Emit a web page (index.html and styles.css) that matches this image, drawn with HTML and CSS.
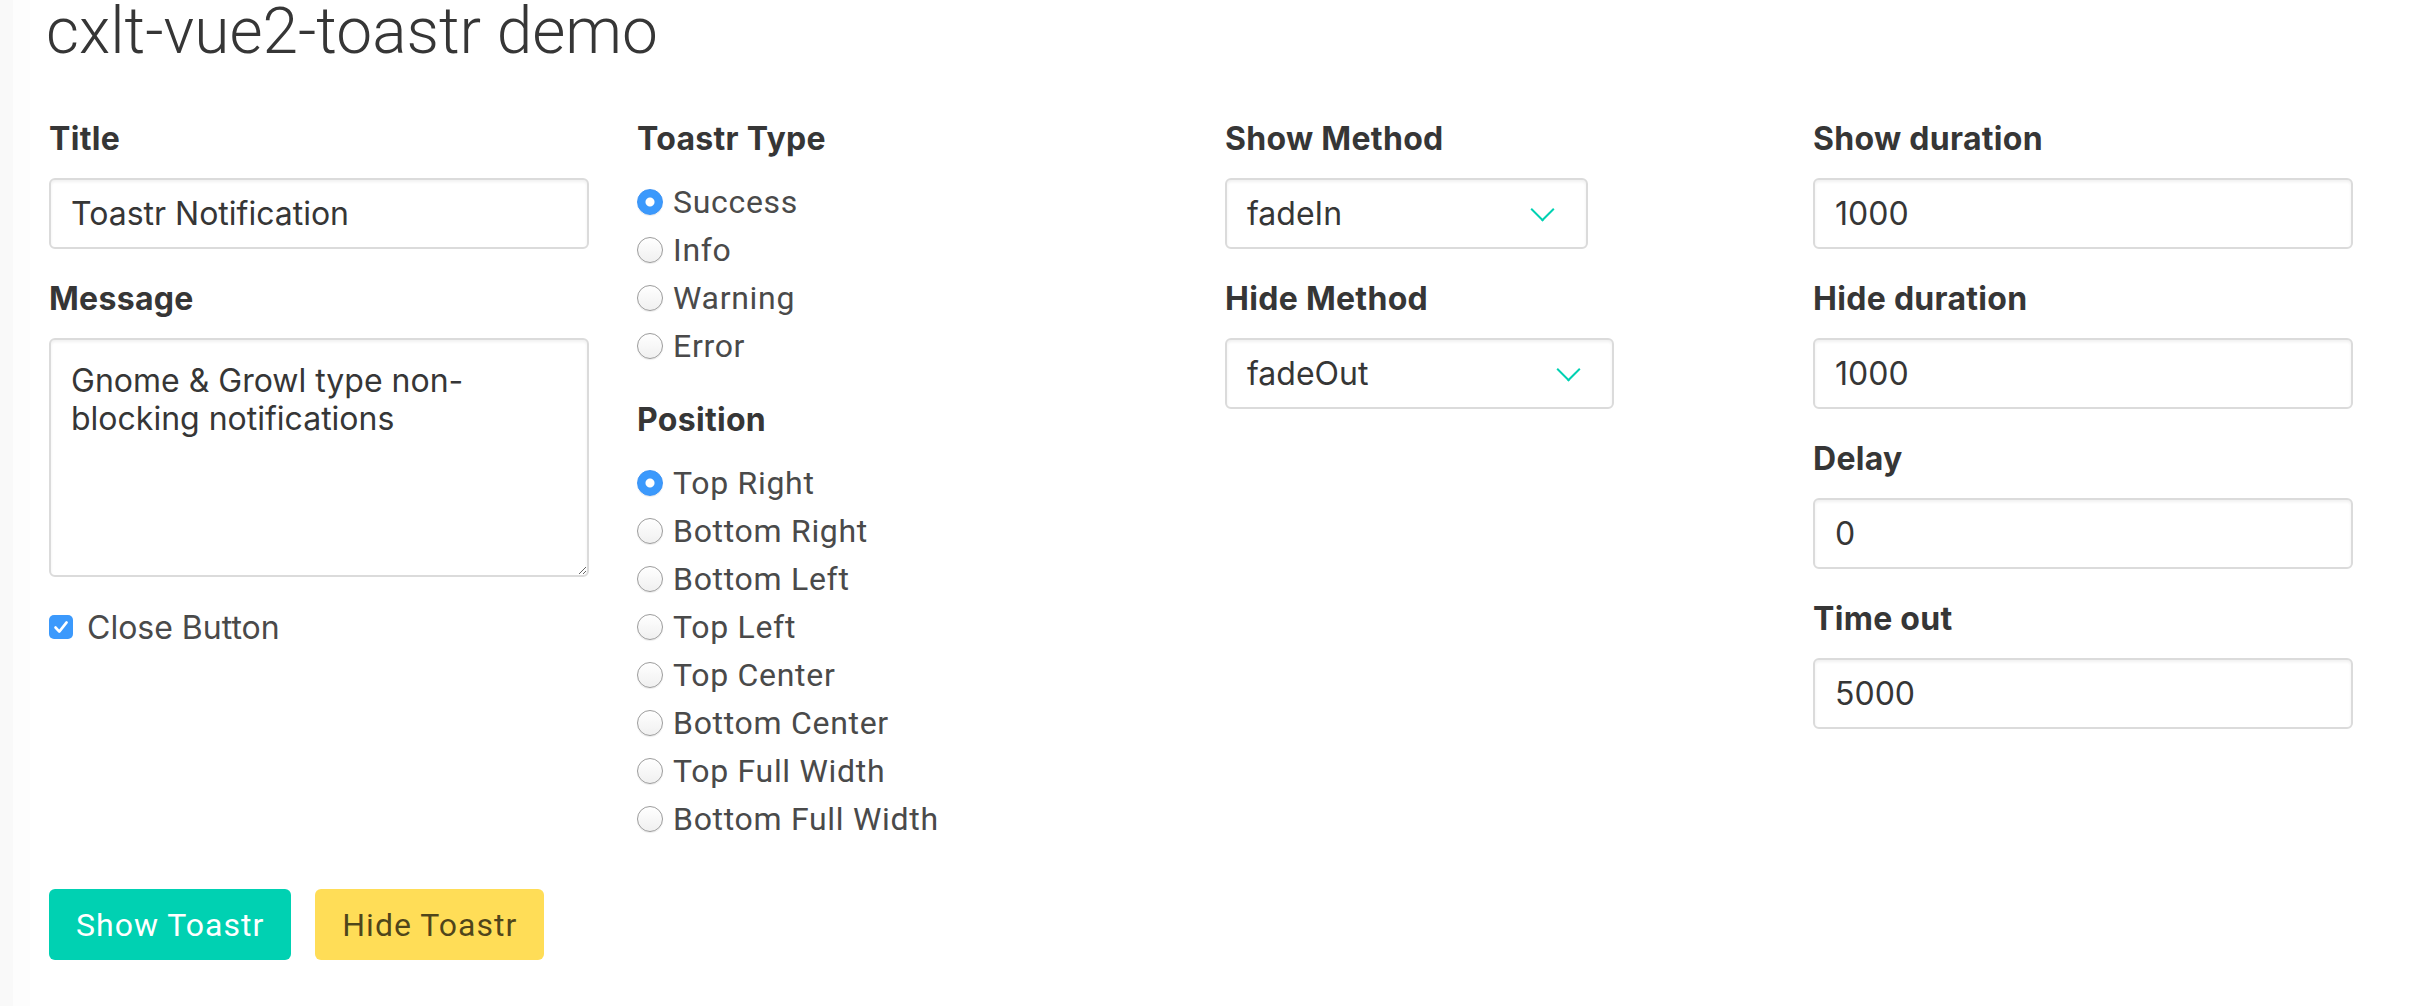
FILE: index.html
```html
<!DOCTYPE html>
<html lang="en">
<head>
<meta charset="utf-8">
<title>cxlt-vue2-toastr demo</title>
<link rel="stylesheet" href="styles.css">
</head>
<body>
<div class="page">
  <h1 class="title">cxlt-vue2-toastr demo</h1>
  <div class="columns">
    <div class="column">
      <div class="field">
        <label class="label">Title</label>
        <div class="input">Toastr Notification</div>
      </div>
      <div class="field">
        <label class="label">Message</label>
        <textarea class="textarea">Gnome &amp; Growl type non-blocking notifications</textarea>
      </div>
      <div class="check-row">
        <span class="checkbox"><svg width="24" height="24" viewBox="0 0 24 24"><path d="M6.5 12.5 L10.3 16.6 L17.6 7.4" fill="none" stroke="#fff" stroke-width="2.6" stroke-linecap="round" stroke-linejoin="round"/></svg></span>
        <span class="check-text">Close Button</span>
      </div>
    </div>
    <div class="column">
      <div class="field">
        <label class="label">Toastr Type</label>
        <div class="radio-row"><span class="radio checked"></span><span>Success</span></div>
        <div class="radio-row"><span class="radio"></span><span>Info</span></div>
        <div class="radio-row"><span class="radio"></span><span>Warning</span></div>
        <div class="radio-row"><span class="radio"></span><span>Error</span></div>
      </div>
      <div class="field">
        <label class="label">Position</label>
        <div class="radio-row"><span class="radio checked"></span><span>Top Right</span></div>
        <div class="radio-row"><span class="radio"></span><span>Bottom Right</span></div>
        <div class="radio-row"><span class="radio"></span><span>Bottom Left</span></div>
        <div class="radio-row"><span class="radio"></span><span>Top Left</span></div>
        <div class="radio-row"><span class="radio"></span><span>Top Center</span></div>
        <div class="radio-row"><span class="radio"></span><span>Bottom Center</span></div>
        <div class="radio-row"><span class="radio"></span><span>Top Full Width</span></div>
        <div class="radio-row"><span class="radio"></span><span>Bottom Full Width</span></div>
      </div>
    </div>
    <div class="column">
      <div class="field">
        <label class="label">Show Method</label>
        <div class="select select-show">fadeIn</div>
      </div>
      <div class="field">
        <label class="label">Hide Method</label>
        <div class="select select-hide">fadeOut</div>
      </div>
    </div>
    <div class="column">
      <div class="field">
        <label class="label">Show duration</label>
        <div class="input">1000</div>
      </div>
      <div class="field">
        <label class="label">Hide duration</label>
        <div class="input">1000</div>
      </div>
      <div class="field">
        <label class="label">Delay</label>
        <div class="input">0</div>
      </div>
      <div class="field">
        <label class="label">Time out</label>
        <div class="input">5000</div>
      </div>
    </div>
  </div>
  <div class="buttons">
    <button class="button is-primary">Show Toastr</button>
    <button class="button is-warning">Hide Toastr</button>
  </div>
</div>
</body>
</html>
```
FILE: styles.css
```css
html, body {
  margin: 0;
  padding: 0;
}
body {
  background: linear-gradient(to right, #f9f9f9 0, #f9f9f9 13px, #fdfdfd 13px, #fdfdfd 30px, #ffffff 30px);
  font-family: Inter, "Noto Sans", sans-serif;
  color: #363636;
  height: 1006px;
  overflow: hidden;
}
.page {
  padding-left: 49px;
  width: 2304px;
}
.title {
  margin: 0 0 51px -3px;
  font-family: Roboto, "Liberation Sans", sans-serif;
  font-weight: 300;
  font-size: 64px;
  line-height: 64px;
  color: #363636;
}
.columns {
  display: grid;
  grid-template-columns: repeat(4, 540px);
  column-gap: 48px;
  align-items: start;
}
.field {
  margin-bottom: 26px;
}
.label {
  display: block;
  font-weight: 700;
  font-size: 32px;
  line-height: 48px;
  letter-spacing: 0.3px;
  color: #363636;
  margin-bottom: 15px;
}
.input, .select, .textarea {
  box-sizing: border-box;
  border: 2px solid #dbdbdb;
  border-radius: 6px;
  background: #fff;
  box-shadow: inset 0 2px 3px rgba(10, 10, 10, 0.06);
  color: #363636;
  font-family: Inter, "Noto Sans", sans-serif;
  font-size: 32px;
}
.input {
  width: 100%;
  height: 71px;
  padding: 0 20px;
  display: flex;
  align-items: center;
}
.textarea {
  display: block;
  width: 100%;
  height: 239px;
  padding: 22px 20px;
  line-height: 38px;
  resize: vertical;
  margin: 0;
}
.select {
  position: relative;
  height: 71px;
  padding: 0 20px;
  display: flex;
  align-items: center;
}
.select::after {
  content: "";
  position: absolute;
  right: 35px;
  top: 50%;
  margin-top: -13px;
  width: 15px;
  height: 15px;
  border: 2px solid #00d1b2;
  border-top: 0;
  border-right: 0;
  transform: rotate(-45deg);
}
.select-show { width: 363px; }
.select-hide { width: 389px; }
.check-row {
  display: flex;
  align-items: center;
  gap: 14px;
  height: 48px;
  margin-top: 22px;
  font-size: 32px;
  color: #4a4a4a;
}
.checkbox {
  width: 24px;
  height: 24px;
  border-radius: 5px;
  background: #3b99fc;
  display: flex;
}
.radio-row {
  display: flex;
  align-items: center;
  gap: 10px;
  height: 48px;
  font-family: Roboto, "Liberation Sans", sans-serif;
  font-size: 32px;
  color: #4a4a4a;
  letter-spacing: 0.7px;
}
.radio {
  box-sizing: border-box;
  width: 26px;
  height: 26px;
  border-radius: 50%;
  border: 1.5px solid #9c9c9c;
  background: linear-gradient(#ffffff, #f0f0f0);
  box-shadow: 0 1px 1px rgba(0, 0, 0, 0.08);
  flex: none;
}
.radio.checked {
  border-color: #3a92f5;
  background: radial-gradient(circle, #ffffff 0, #ffffff 4px, #3b99fc 5px);
}
.buttons {
  display: flex;
  gap: 24px;
  margin-top: 20px;
}
.button {
  height: 71px;
  border: 0;
  border-radius: 6px;
  padding: 0 27px;
  font-family: Roboto, "Liberation Sans", sans-serif;
  font-size: 32px;
  letter-spacing: 1px;
  cursor: pointer;
}
.is-primary {
  background: #00d1b2;
  color: #ffffff;
}
.is-warning {
  background: #ffdd57;
  color: rgba(0, 0, 0, 0.7);
}
```
